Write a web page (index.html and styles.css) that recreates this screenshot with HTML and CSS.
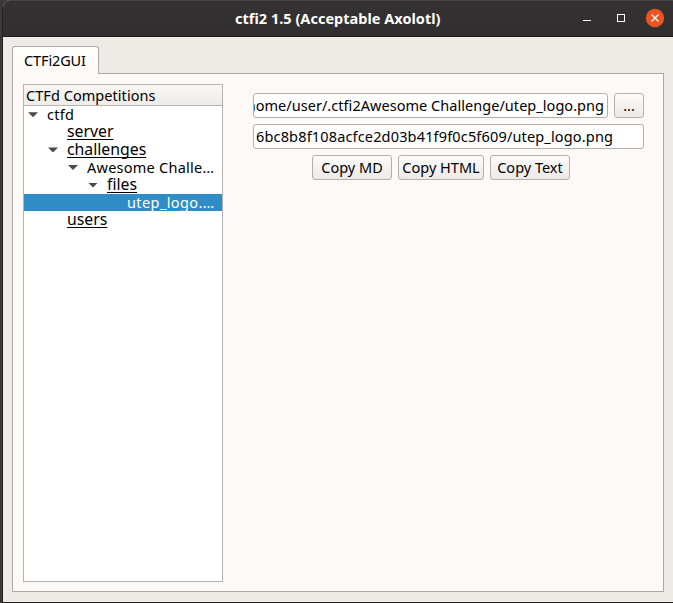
FILE: index.html
```html
<!DOCTYPE html>
<html lang="en">
<head>
<meta charset="utf-8">
<title>ctfi2 1.5 (Acceptable Axolotl)</title>
<link rel="stylesheet" href="styles.css">
</head>
<body>
<div class="window">
  <header class="titlebar">
    <h1>ctfi2 1.5 (Acceptable Axolotl)</h1>
    <svg class="controls" width="92" height="37" viewBox="0 0 92 37">
      <path d="M3 20.5h8" stroke="#fff"/>
      <rect x="37.5" y="14.5" width="7" height="7" fill="none" stroke="#fff"/>
      <circle cx="75" cy="18" r="9.2" fill="#e95420"/>
      <path d="M71.5 14.5l7 7m0-7l-7 7" stroke="#fff" stroke-width="1.3"/>
    </svg>
  </header>
  <main class="content">
    <div class="tab"><span class="t-tab">CTFi2GUI</span></div>
    <section class="pane">
      <div class="tree">
        <div class="tree-head">CTFd Competitions</div>
        <div class="row l0"><i class="arrow"></i><span class="t-item">ctfd</span></div>
        <div class="row l1 tall"><span class="link">server</span></div>
        <div class="row l1 tall"><i class="arrow"></i><span class="link">challenges</span></div>
        <div class="row l2"><i class="arrow"></i><span class="t-item">Awesome Challe…</span></div>
        <div class="row l3 tall"><i class="arrow"></i><span class="link">files</span></div>
        <div class="row l4 selected"><span class="t-logo">utep_logo.…</span></div>
        <div class="row l1 tall"><span class="link">users</span></div>
      </div>
      <div class="detail">
        <div class="line">
          <div class="field clipped"><span class="t-path">home/user/.ctfi2Awesome Challenge/utep_logo.png</span></div>
          <button class="browse">...</button>
        </div>
        <div class="line"><div class="field"><span class="t-hash">6bc8b8f108acfce2d03b41f9f0c5f609/utep_logo.png</span></div></div>
        <div class="line actions">
          <button>Copy MD</button>
          <button class="wide">Copy HTML</button>
          <button>Copy Text</button>
        </div>
      </div>
    </section>
  </main>
</div>
</body>
</html>
```
FILE: styles.css
```css
* { box-sizing: border-box; }
body {
  margin: 0;
  height: 603px;
  overflow: hidden;
  background: #3a3939;
  color: #000;
  font: 14.5px/17px "Noto Sans", "Open Sans", sans-serif;
  white-space: nowrap;
}
.window {
  height: 603px;
  margin-left: 2px;
  display: flex;
  flex-direction: column;
  border-left: 1px solid #222;
  border-bottom: 1px solid #222;
  border-radius: 8px 0 0 0;
  overflow: hidden;
  background: #eeebe7;
}
.titlebar {
  height: 37px;
  flex: none;
  display: flex;
  align-items: center;
  justify-content: flex-end;
  background: linear-gradient(#343233, #302e2f);
  border-top: 1px solid #454344;
  border-bottom: 1px solid #1d1c1c;
}
h1 {
  margin: 0 139px 2px 0;
  width: 206px;
  color: #fff;
  font-size: 14.5px;
  line-height: 20px;
  letter-spacing: 0.02px;
}
.controls { flex: none; margin-right: 1px; }
.content { padding: 9px 9px 10px 9px; flex: 1; display: flex; flex-direction: column; }
.tab {
  width: 87px;
  height: 28px;
  margin-bottom: -1px;
  padding: 5px 0 0 11px;
  z-index: 1;
  border: 1px solid #aba8a5;
  border-bottom: 0;
  border-radius: 3px 3px 0 0;
  background: linear-gradient(#fff, #fdf9f6);
}
.pane {
  flex: 1;
  display: flex;
  gap: 30px;
  padding: 10px 19px 9px 10px;
  border: 1px solid #aba8a5;
  background: #fdf9f6;
}
.tree { flex: none; width: 200px; border: 1px solid #b5b2af; background: #fff; }
.tree-head {
  height: 21px;
  padding: 2px 0 0 2px;
  border-bottom: 1px solid #b5b2af;
  letter-spacing: 0.05px;
  background: linear-gradient(#f9f7f5, #eeebe8);
}
.row { height: 17.4px; display: flex; align-items: center; line-height: 17px; }
.row.tall { height: 17.7px; }
.l0 { padding-left: 23px; }
.l1 { padding-left: 43px; }
.l2 { padding-left: 63px; }
.l3 { padding-left: 83px; }
.l4 { padding-left: 103px; }
.selected { background: #308cc6; color: #fff; }
.arrow {
  width: 10px;
  height: 5px;
  margin: 0 9px 0 -19px;
  background: #4a4a4a;
  clip-path: polygon(0 0, 100% 0, 50% 100%);
}
.link {
  margin-top: -1px;
  font-size: 15.8px;
  text-decoration: underline;
  text-decoration-thickness: 1px;
  text-underline-offset: 2px;
  text-decoration-skip-ink: none;
}
.detail { flex: 1; min-width: 0; padding-top: 9px; display: flex; flex-direction: column; gap: 6px; }
.line { display: flex; gap: 6px; }
.field {
  flex: 1;
  min-width: 0;
  height: 25px;
  display: flex;
  align-items: center;
  padding: 0 3px 0 2px;
  overflow: hidden;
  border: 1px solid #b3b0ad;
  border-radius: 3px;
  background: #fff;
}
.clipped { justify-content: flex-end; }
button {
  width: 80px;
  height: 25px;
  padding: 0;
  border: 1px solid #b3b0ad;
  border-radius: 3px;
  background: linear-gradient(#fdfcfb, #ece9e7);
  color: #000;
  font: inherit;
}
.wide { width: 86px; }
.browse { width: 30px; }
.actions { justify-content: center; margin-right: 15px; }
.t-tab { letter-spacing: -0.12px; }
.t-item { letter-spacing: 0.25px; }
.t-logo { letter-spacing: 0.4px; }
.t-path { letter-spacing: 0.04px; }
.t-hash { letter-spacing: 0.16px; }
```
